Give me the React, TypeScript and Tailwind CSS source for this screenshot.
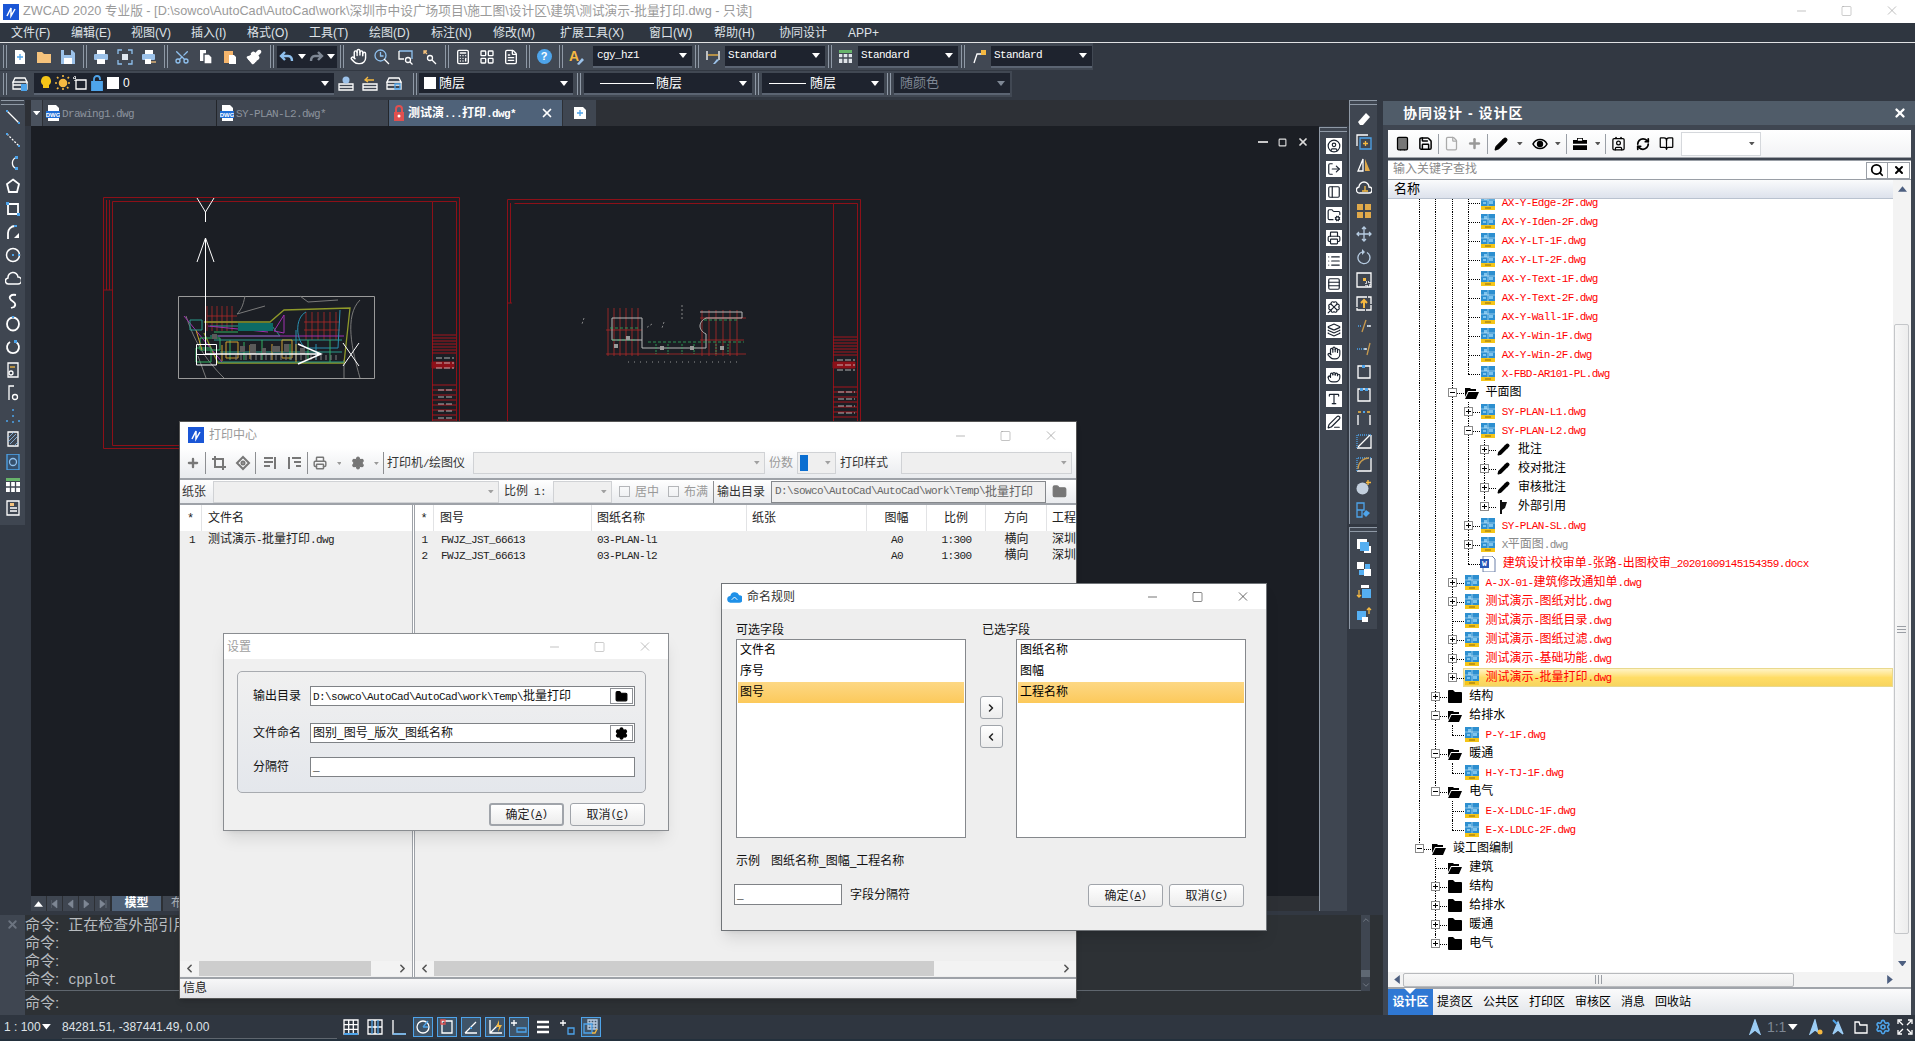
import type { ReactNode } from "react";
import {
  BookOpen, Building, Calculator, CircleUser, Clover, Contact, File, FileText, FolderCog, Grab, Hand, Layers,
  LayoutGrid, List, LogOut, PanelLeft, Paintbrush, Pencil, PenLine, Plus, Printer, RefreshCw, Rows3, Save, Scissors, Search,
  Settings, Type, X, Minus, Square, Folder, ChevronLeft, ChevronRight, ChevronUp, ChevronDown,
} from "lucide-react";

// SimSun-like run: latin is narrow mono, han stays on the 12px grid
const Sim = ({ t }: { t: string }) => (
  <>
    {t.split(/([\x20-\x7e]+)/).filter(Boolean).map((p, i) =>
      /^[\x20-\x7e]+$/.test(p) ? (
        <span key={i} className="font-['Liberation_Mono',monospace] text-[11px] tracking-[-0.6px] whitespace-pre">{p}</span>
      ) : (
        <span key={i}>{p}</span>
      )
    )}
  </>
);

const Mn = ({ a, k }: { a: string; k: string }) => (
  <>
    {a}
    <Sim t="(" />
    <span className="underline"><Sim t={k} /></span>
    <Sim t=")" />
  </>
);

const S = ({ children, c = "#fff", w = 1.3 }: { children: ReactNode; c?: string; w?: number }) => (
  <svg viewBox="0 0 16 16" className="w-4 h-4 shrink-0" fill="none" stroke={c} strokeWidth={w}>{children}</svg>
);

const Tri = ({ c = "#fff", s = 1 }: { c?: string; s?: number }) => (
  <svg viewBox="0 0 8 5" width={8 * s} height={5 * s} className="shrink-0"><path d="M0 0h8L4 5z" fill={c} /></svg>
);

const Grip = () => (
  <div className="w-[7px] h-full flex justify-center py-[2px] shrink-0"><div className="w-[4px] border-x border-[#8f99a6]" /></div>
);
const Sep = ({ w = "w-[9px]" }: { w?: string }) => (
  <div className={`${w} h-full flex justify-center py-[2px] shrink-0`}><div className="w-[4px] border-x border-[#8f99a6]" /></div>
);
const Slot = ({ children }: { children?: ReactNode }) => (
  <div className="w-6 h-full flex items-center justify-center shrink-0">{children}</div>
);
const Combo = ({ className, children, arrow = "#fff" }: { className: string; children?: ReactNode; arrow?: string }) => (
  <div className={`${className} h-[22px] flex items-center justify-between bg-[#1e232e] border-b-2 border-[#5b6472] pr-[5px] shrink-0`}>
    <div className="flex items-center min-w-0">{children}</div>
    <Tri c={arrow} />
  </div>
);

const MENU = [
  ["文件(F)", "w-[60px]"], ["编辑(E)", "w-[60px]"], ["视图(V)", "w-[60px]"], ["插入(I)", "w-[56px]"], ["格式(O)", "w-[62px]"],
  ["工具(T)", "w-[60px]"], ["绘图(D)", "w-[62px]"], ["标注(N)", "w-[62px]"], ["修改(M)", "w-[67px]"], ["扩展工具(X)", "w-[89px]"],
  ["窗口(W)", "w-[65px]"], ["帮助(H)", "w-[65px]"], ["协同设计", "w-[69px]"], ["APP+", "w-[40px]"],
];

const Toolbar1 = () => (
  <div className="w-[1093px] h-[27px] bg-[#414853] flex items-center pl-[1px]">
    <Grip />
    <Slot><S c="none"><path d="M3 1h7l3 3v11H3z" fill="#fff" /><path d="M8 5v6M5 8h6" stroke="#4ea4ea" /></S></Slot>
    <Slot><S c="none"><path d="M1 3h5l2 2h7v9H1z" fill="#f5c27c" /></S></Slot>
    <Slot><S c="none"><path d="M1 1h11l3 3v11H1z" fill="#9cc2ea" /><path d="M4 1h7v5H4z" fill="#414853" /><path d="M4 9h8v6H4z" fill="#fff" /></S></Slot>
    <Sep />
    <Slot><S c="none"><path d="M4 1h8v4H4z" fill="#fff" /><rect x="1" y="5" width="14" height="6" rx="1" fill="#9cc2ea" /><path d="M4 10h8v5H4z" fill="#fff" /></S></Slot>
    <Slot><S c="#8fc0ee"><path d="M1 5V1h4M11 1h4v4M15 11v4h-4M5 15H1v-4" /><path d="M5 5h6v6H5z" fill="#dfe8f2" stroke="none" /></S></Slot>
    <Slot><S c="none"><path d="M4 1h8v4H4z" fill="#fff" /><rect x="1" y="5" width="13" height="6" rx="1" fill="#9cc2ea" /><path d="M4 10h6v5H4z" fill="#fff" /><path d="M10 13h5" stroke="#f5c27c" /></S></Slot>
    <Sep />
    <Slot><Scissors size={16} color="#8fc0ee" className="-rotate-90" /></Slot>
    <Slot><S c="none"><path d="M2 1h6v11H2z" fill="#fff" /><path d="M6 5h5l3 3v7H6z" fill="#fff" stroke="#414853" /></S></Slot>
    <Slot><S c="none"><path d="M2 2h9v12H2z" fill="#f5b56c" /><path d="M7 6h5l2 2v7H7z" fill="#fff" /></S></Slot>
    <Slot><Paintbrush size={16} color="#fff" fill="#fff" /></Slot>
    <Sep w="w-[11px]" />
    <div className="w-[60px] h-[22px] bg-[#1e232e] flex items-center justify-around px-[1px] shrink-0">
      <S c="#8fc0ee" w={2.4}><path d="M6 3 2 7l4 4M2 7h7c3 0 4 2 4 5" /></S>
      <Tri />
      <S c="#7e8794" w={2.4}><path d="m10 3 4 4-4 4M14 7H7c-3 0-4 2-4 5" /></S>
      <Tri />
    </div>
    <Sep />
    <Slot><Hand size={17} color="#fff" /></Slot>
    <Slot><S c="#8fc0ee"><circle cx="6.500" cy="6.500" r="5.500" /><path d="M6.500 3v4h3" /><path d="m10 10 5 5" stroke="#fff" /></S></Slot>
    <Slot><S><path d="M1 2h13v8" stroke="#8fc0ee" /><path d="M1 2v8h5" /><circle cx="10" cy="11" r="2.500" /><path d="m12 13 2.500 2.500" /></S></Slot>
    <Slot><S><path d="M2 2 5 5M2 5V2h3" stroke="#f5c27c" /><circle cx="8" cy="9" r="2.500" /><path d="m10 11 4 4" /></S></Slot>
    <Sep />
    <Slot><Calculator size={16} color="#fff" /></Slot>
    <Slot><LayoutGrid size={16} color="#fff" /></Slot>
    <Slot><FileText size={16} color="#fff" /></Slot>
    <Sep />
    <Slot><div className="w-[15px] h-[15px] rounded-full bg-[#4ea4ea] text-white text-[11px] leading-[15px] text-center font-bold">?</div></Slot>
    <Sep />
    <Slot><S c="none"><text x="0" y="12" fontSize="14" fontWeight="bold" fill="#f5b942">A</text><path d="m8 15 5-6 2 2-5 5z" fill="#9cc2ea" /></S></Slot>
    <Combo className="w-[99px] ml-[4px] pl-[4px] text-white"><Sim t="cgy_hz1" /></Combo>
    <Sep />
    <Slot><S><path d="M2 2v9M14 2v9" /><path d="M3 6h10" stroke="#f5b942" /><path d="m8 15 4-5 2 1-4 4z" fill="#9cc2ea" stroke="none" /></S></Slot>
    <Combo className="w-[100px] pl-[3px] text-white"><Sim t="Standard" /></Combo>
    <Sep />
    <Slot><S c="none"><path d="M1 1h13v3H1z" fill="#67b36a" /><path d="M1 5h13v9H1z" fill="#dfe3e8" /><path d="M5 5v9M10 5v9M1 9h13" stroke="#414853" /></S></Slot>
    <Combo className="w-[100px] pl-[3px] text-white"><Sim t="Standard" /></Combo>
    <Sep />
    <Slot><S><path d="M3 14 6 5h5" /><path d="M10 1h5v5h-5z" fill="#f5b942" stroke="none" /></S></Slot>
    <Combo className="w-[101px] pl-[3px] text-white"><Sim t="Standard" /></Combo>
  </div>
);

const Toolbar2 = () => (
  <div className="w-[1012px] h-[26px] bg-[#414853] flex items-center pl-[1px] mt-[1px]">
    <Grip />
    <Slot><S><path d="M3 2h10l2 4H1zM1 6h14v3H1zM1 9h14v4H1z" /><path d="M9 8h6v7H9z" fill="#4ea4ea" stroke="none" /></S></Slot>
    <Combo className="w-[300px] ml-[2px] pl-[4px] text-white">
      <div className="flex items-center gap-[1px]">
        <S c="none"><path d="M8 1a5 5 0 0 1 3 9v3H5v-3a5 5 0 0 1 3-9z" fill="#f5c518" /></S>
        <S c="#f5b942" w={1.6}><circle cx="8" cy="8" r="3.500" fill="#f5b942" /><path d="M8 0v3M8 13v3M0 8h3M13 8h3M2 2l2 2M12 12l2 2M14 2l-2 2M2 14l2-2" strokeDasharray="2 1" /></S>
        <S><path d="M4 5h10v9H4z" /><path d="M3 1v5M1 3h4" stroke="#fff" strokeDasharray="1 1" /></S>
        <S c="#4ea4ea" w={1.8}><path d="M3 7h10v8H3z" fill="#4ea4ea" /><path d="M5 7V4a3 3 0 0 1 6 0v1" /></S>
        <div className="w-[12px] h-[12px] bg-white ml-[1px]" />
        <span className="ml-[3px] text-[12px]">0</span>
      </div>
    </Combo>
    <Slot><S><path d="M1 8h14v3H1zM1 11h14v3H1z" /><circle cx="8" cy="4" r="3.500" fill="#9cc2ea" stroke="none" /></S></Slot>
    <Slot><S><path d="M1 8h14v3H1zM1 11h14v3H1z" /><path d="M6 1 3 4l3 2M3 4h9" stroke="#f5b942" /></S></Slot>
    <Slot><S><path d="M3 2h10l2 4H1zM1 6h14v3H1zM1 9h14v4H1z" /><path d="M9 8h5v5H9z" stroke="#4ea4ea" /></S></Slot>
    <div className="w-[4px] shrink-0" />
    <Sep />
    <Combo className="w-[154px] pl-[5px] text-white text-[13px]"><div className="w-[12px] h-[12px] bg-white mr-[3px]" />随层</Combo>
    <Sep w="w-[11px]" />
    <Combo className="w-[168px] pl-[16px] text-white text-[13px]"><div className="w-[54px] border-t border-white mr-[2px]" />随层</Combo>
    <Sep w="w-[10px]" />
    <Combo className="w-[122px] pl-[7px] text-white text-[13px]"><div className="w-[37px] border-t border-white mr-[4px]" />随层</Combo>
    <Sep w="w-[10px]" />
    <Combo className="w-[116px] pl-[6px] text-[#7e8794] text-[13px]" arrow="#7e8794">随颜色</Combo>
  </div>
);

const FileTab = ({ className, name }: { className: string; name: string }) => (
  <div className={`${className} h-full bg-[#3f4651] flex items-center pl-[3px] text-[#8c939d] border-r border-[#23262b] shrink-0`}>
    <svg viewBox="0 0 14 16" className="w-[14px] h-[16px] shrink-0">
      <path d="M2 0h8l3 3v13H2z" fill="#fff" /><path d="M0 6h14v7H0z" fill="#1f6fd8" />
      <text x="7" y="12" fontSize="6" fill="#fff" textAnchor="middle" fontWeight="bold">DWG</text>
    </svg>
    <span className="ml-[2px]"><Sim t={name} /></span>
  </div>
);

const LEFT_ICONS: ReactNode[] = [
  <><path d="m2 2 12 12" /><path d="M1 1h2v2H1zM13 13h2v2h-2z" fill="#4ea4ea" stroke="none" /></>,
  <><path d="m2 2 12 12" strokeDasharray="2 1.500" /><path d="M1 1h2v2H1zM13 13h2v2h-2z" fill="#4ea4ea" stroke="none" /></>,
  <><path d="M11 2.500a6 6 0 0 0 0 11" /><path d="M10 1h3v3h-3zM10 12h3v3h-3z" fill="#4ea4ea" stroke="none" /></>,
  <path d="M8 1.500 14 6l-2 8H4L2 6z" strokeWidth="1.800" />,
  <><path d="M3 3h10v10H3z" strokeWidth="1.800" /><path d="M12 12h3v3h-3zM1 1h3v3H1z" fill="#4ea4ea" stroke="none" /></>,
  <><path d="M3 15V9a7 7 0 0 1 7-7" strokeWidth="1.800" /><path d="M9 14l5-5v5z" fill="#fff" stroke="none" /><path d="M9 1h3v2H9z" fill="#4ea4ea" stroke="none" /></>,
  <><circle cx="8" cy="8" r="6.500" strokeWidth="1.500" /><path d="M7 7h2v2H7zM13 7h2v2h-2z" fill="#4ea4ea" stroke="none" /></>,
  <path d="M4 14a3 3 0 0 1-1-6 5 5 0 0 1 10-1 3.500 3.500 0 0 1 0 7z" strokeWidth="1.500" />,
  <path d="M11 2C6 1 3 4 6 7c3 2 6 4 3 7l-3 1" strokeWidth="1.800" stroke="#fff" />,
  <><ellipse cx="8" cy="8" rx="6" ry="6.500" strokeWidth="1.800" /><path d="M7 0h2v2H7z" fill="#4ea4ea" stroke="none" /></>,
  <><path d="M5 3a6 6 0 1 0 6 0" strokeWidth="1.800" /><path d="M9 1h3v3H9z" fill="#4ea4ea" stroke="none" /></>,
  <><path d="M3 1h10v14H3z" /><circle cx="6" cy="11" r="2" /><path d="M5 5h5" stroke="#f5b942" /></>,
  <><path d="M4 15V1h5" /><circle cx="10" cy="12" r="2.500" /></>,
  <path d="M8 1v2M8 7v2M8 13v2M2 12v2M14 12v2" stroke="#4ea4ea" strokeWidth="1.500" />,
  <><path d="M3 1h10v14H3z" /><path d="m3 7 6-6M3 11l8-8M5 13l8-8M9 15l4-4" stroke="#8fc0ee" strokeWidth=".8" /></>,
  <><path d="M2 0h12v16H2z" stroke="#4ea4ea" fill="#36506c" /><circle cx="8" cy="8" r="3.500" stroke="#8fc0ee" /></>,
  <><path d="M1 1h14v3H1z" fill="#67b36a" stroke="none" /><path d="M1 5h14v10H1z" fill="#fff" stroke="none" /><path d="M5.500 5v10M10.500 5v10M1 10h14" stroke="#414853" /></>,
  <><path d="M2 1h12v14H2z" /><path d="M5 8h7M5 11h7" /><path d="M5 3h4v3H5z" fill="#f5c27c" stroke="none" /></>,
];

const STRIP_B: ReactNode[] = [
  <path d="M2 11 10 2l4 4-7 8H4z" fill="#fff" stroke="none" />,
  <><path d="M1 12V1h11" /><path d="M4 4h11v11H4z" stroke="#4ea4ea" /><path d="M9.500 7v5M7 9.500h5" stroke="#f5b942" /></>,
  <><path d="M7 2v12H2z" /><path d="M9 2v12h5z" fill="#e0a94a" stroke="none" /></>,
  <><path d="M4 13a3 3 0 0 1-1-6 5 5 0 0 1 10 0 3 3 0 0 1 0 6z" /><path d="M6 11h6M9 11V6" stroke="#f5b942" /></>,
  <path d="M1 1h6v6H1z M9 1h6v6H9z M1 9h6v6H1z M9 9h6v6H9z" fill="#e0a94a" stroke="none" />,
  <path d="M8 1v14M1 8h14M6 3l2-2 2 2M6 13l2 2 2-2M3 6 1 8l2 2M13 6l2 2-2 2" stroke="#b7cce2" />,
  <><path d="M11 3.500a6 6 0 1 1-5-.500" stroke="#b7cce2" /><path d="m6 0 3 3-3 3z" fill="#b7cce2" stroke="none" /></>,
  <><path d="M1 1h14v14H1z" /><path d="M7 6h3v3H7z" fill="#f5b942" stroke="none" /><path d="M10 10h4v4h-4z" strokeDasharray="1 1" /></>,
  <><path d="M1 2h14v13H1z" strokeDasharray="10 1" /><path d="M8 13V5M5 8l3-3 3 3" stroke="#f5b942" strokeWidth="2" /></>,
  <><path d="M2 8h4M11 8h4" stroke="#4ea4ea" strokeDasharray="1 1" /><path d="M10 2 6 14" stroke="#c89b4e" /><path d="M11 8h4" /></>,
  <><path d="M1 8h9" stroke="#4ea4ea" strokeDasharray="1 1" /><path d="M8 8h3" /><path d="m14 2-3 12" stroke="#c89b4e" /></>,
  <><path d="M2 2h12v12H2z" /><path d="M6 1h3v3H6z" fill="#4ea4ea" stroke="none" /></>,
  <><path d="M2 2h12v12H2z" /><path d="M4 1h3v3H4zM9 1h3v3H9z" fill="#4ea4ea" stroke="none" /></>,
  <><path d="M2 15V5M14 15V5" /><path d="M2 2h3M14 2h-3" stroke="#f5b942" /><path d="M7 1h2v2H7z" fill="#4ea4ea" stroke="none" /></>,
  <><path d="M15 2v13H1" /><path d="M1 15V2h14" stroke="#4ea4ea" strokeDasharray="1 1" /><path d="M2 14 14 2" /></>,
  <><path d="M15 2v13H1" /><path d="M1 15V2h14" stroke="#4ea4ea" strokeDasharray="1 1" /><path d="M2 13A11 11 0 0 1 13 2" stroke="#c89b4e" /></>,
  <><circle cx="6.500" cy="9.500" r="6" fill="#c3cfdd" stroke="none" /><path d="M12 1v5M10 3.500h5" stroke="#f5b942" /></>,
  <><path d="M1 1h7v7H1zM1 8h5v7H1z" stroke="#4ea4ea" /><path d="m10 8 4 3-4 4-3-3z" fill="#4ea4ea" stroke="none" /></>,
];
const STRIP_B2: ReactNode[] = [
  <><path d="M1 1h10v10H1zM8 8h7v7H8z" fill="#fff" stroke="none" /><path d="M4 4h9v9H4z" fill="#55aff2" stroke="none" /></>,
  <><path d="M1 1h7v7H1zM8 8h7v7H8z" fill="#fff" stroke="none" /><path d="M9 3h5v5H9zM3 9h5v5H3z" fill="#55aff2" stroke="none" /></>,
  <><path d="M5 1h8v3H5z" fill="#fff" stroke="none" /><path d="M6 5h9v9H6z" fill="#55aff2" stroke="none" /><path d="M3 6v7M1 11l2 2 2-2" stroke="#f5b942" /></>,
  <><path d="M1 4h9v9H1z" fill="#55aff2" stroke="none" /><path d="M6 10h6v5H6z" fill="#fff" stroke="none" /><path d="M13 1v6M11 3l2-2 2 2" stroke="#f5b942" /></>,
];
const STRIP_A = [CircleUser, LogOut, PanelLeft, FolderCog, Printer, List, Rows3, Clover, Layers, Hand, Grab, Type, PenLine];

const IconStrip = ({ icons }: { icons: ReactNode[] }) => (
  <div className="flex flex-col items-center">
    {icons.map((d, i) => (
      <div key={i} className="h-[23px] flex items-center justify-center"><S>{d}</S></div>
    ))}
  </div>
);

const Drawing = () => {
  const stripes = (x1: number, x2: number, y1: number, y2: number, step: number) => {
    const out: ReactNode[] = [];
    for (let y = y1; y < y2; y += step) out.push(<path key={`${x1}-${y}`} d={`M${x1} ${y}H${x2}`} />);
    return out;
  };
  const ticks = (x1: number, x2: number, y1: number, y2: number, step: number) => {
    const out: ReactNode[] = [];
    for (let x = x1; x < x2; x += step) out.push(<path key={`${y1}-${x}`} d={`M${x} ${y1}V${y2}`} />);
    return out;
  };
  return (
    <svg viewBox="31 126 1288 770" className="w-full h-full block">
      <g fill="none" stroke="#8d1018" strokeWidth="1">
        <path d="M103.500 197.500h356v251h-356zM112.500 201.500h320v244h-320zM432.500 201.500h24v244M106.500 200v90M109.500 200v90M112 290h-8" />
        <path d="M507.500 199.500h353V430M507.500 199.500V430M514.500 203.500h319V430M833.500 203.500h24V430M510.500 203v100M512 303h-5" />
        <g stroke="#a6141c">{stripes(432, 456, 335, 356, 3)}{stripes(432, 456, 385, 422, 5)}{stripes(833, 857, 337, 358, 3)}{stripes(833, 857, 387, 422, 5)}</g>
        <path d="M432 362h22v6h-22zM833 362h22v6h-22z" fill="#8d1018" />
        <g stroke="#d8d8d8" strokeDasharray="6 2" strokeWidth=".8">{stripes(436, 454, 358, 372, 5)}{stripes(837, 855, 360, 374, 5)}{stripes(438, 454, 390, 420, 7)}{stripes(838, 855, 392, 420, 7)}</g>
      </g>
      <g fill="none" strokeWidth="1">
        <path d="M178.500 296.500h196v82h-196z" stroke="#9a9a9a" />
        <path d="M186 316c10 30 22 46 38 62M245 296c-2 10-4 14-8 18l28-8M300 296l8 6 30-2M360 300c-16 16-8 50 0 78M344 378V360M206 378l-8-22" stroke="#7a7a7a" />
        <g stroke="#b02828" strokeWidth=".8">{ticks(207, 236, 306, 331, 5)}<path d="M207 316h30M207 322h30" />{ticks(306, 340, 312, 340, 6)}<path d="M304 322h36M304 330h36" /></g>
        <path d="M204 322h66l14-12 66-2-6 55H218l-14-30" stroke="#8f9a2a" strokeWidth="1.300" />
        <path d="M210 326h62l8 10h-70M214 340h128M220 352h122M218 362h126" stroke="#2a9a8a" />
        <path d="M184 316l38 46M208 326l60 6M284 315l-10 16 10 2zM218 336h126" stroke="#a030b0" />
        <path d="M306 312c-12 6-10 30 0 36h32l2-38M296 330v30M316 344v16" stroke="#2a8fb0" />
        <path d="M200 338h20v12h-20zM196 348h15v14h-15zM230 340v20M244 342v18M262 340v20M290 344v16M308 340v20M330 340v22M214 332h24" stroke="#30b060" />
        <path d="M222 345v16M250 345v14M272 344v16M296 344v18M226 342h12v16h-12zM282 340h10v18h-10zM196 330l6 20" stroke="#d0a030" />
        <path d="M238 323h35v8h-35z" fill="#0d6b66" stroke="none" />
        <path d="M190 320h12v10h-12z" stroke="#2a9a8a" />
        <g stroke="#808080">{ticks(236, 340, 355, 360, 5)}</g>
        <path d="M250 344h6v10h-6zM262 348h4v6h-4zM272 346h8v6h-8zM284 344h5v8h-5zM240 346h5v6h-5zM212 334h5v5h-5zM300 348h5v6h-5z" fill="#5a5a5a" stroke="none" />
      </g>
      <g fill="none" stroke="#fff" strokeWidth="1">
        <path d="M197 198l8.500 14 8.500-14M205.500 212v10M205.500 238V354M197 262l8.500-24 8.500 24" />
        <path d="M205.500 354H321M298 344l23 10-23 10" strokeWidth="1.500" />
        <path d="M343 343l16 23M359 343l-16 23" />
        <path d="M196.500 344.500h20v20.500h-20zM196.500 354.500h20" />
      </g>
      <g fill="none" strokeWidth=".8">
        <g stroke="#b02828">{ticks(608, 640, 308, 356, 6)}{ticks(702, 744, 310, 356, 7)}<path d="M606 330h36M606 354h140M700 318h46M700 340h44" /></g>
        <path d="M700 312h42v6h-36c-8 4-8 12 0 16v14h-64v-8h-30v-22h30v22" stroke="#b8b8b8" strokeWidth="1" />
        <path d="M610 328h30M612 340h24M648 342h96M704 320h34" stroke="#30b060" strokeDasharray="3 2" />
        <path d="M656 344v10M668 344v10M682 344v10M694 344v10M716 344v10M728 344v10" stroke="#30b060" strokeDasharray="2 1" />
        <path d="M628 362h112" stroke="#b0b0b0" strokeDasharray="1 5" />
        <path d="M682 305v14M584 318l-2 6M652 324l-6 4M664 322l-2 6" stroke="#a0a0a0" strokeDasharray="2 2" />
        <path d="M614 344h4v4h-4zM626 336h4v4h-4zM660 346h4v4h-4zM690 346h4v4h-4zM720 346h4v4h-4z" fill="#9a9a9a" stroke="none" />
      </g>
    </svg>
  );
};

const Command = () => (
  <div className="h-[100px] flex bg-[#2d3135] text-[#b8bcc0] mt-[4px]">
    <div className="w-[25px] bg-[#3f4651] flex justify-center pt-[3px] shrink-0"><X size={13} strokeWidth={3.5} color="#6c7480" /></div>
    <div className="flex-1 min-w-0 flex flex-col">
      <div className="h-[76px] border-b border-[#5f666e] text-[15px] leading-[18px] pt-[1px] flex flex-col">
        <div>命令:<span className="ml-[9px]">正在检查外部引用</span></div>
        <div>命令:</div>
        <div>命令:</div>
        <div>命令:<span className="ml-[9px] font-['Liberation_Mono',monospace] text-[14px] tracking-[-0.4px]">cpplot</span></div>
      </div>
      <div className="text-[15px] leading-[22px] pt-[1px]">命令:</div>
    </div>
    <div className="w-[9px] h-[76px] mr-[13px] bg-[#3f4651] flex flex-col items-center justify-between shrink-0 pb-[1px]">
      <ChevronUp size={10} color="#79818c" />
      <div className="flex flex-col items-center w-full">
        <div className="w-full h-[7px] bg-[#5f6873] mb-[3px]" />
        <ChevronDown size={10} color="#79818c" />
      </div>
    </div>
  </div>
);

const LineBox = ({ on, children }: { on?: boolean; children: ReactNode }) => (
  <div className="w-6 flex items-center justify-center shrink-0">
    <div className={`w-[20px] h-[20px] flex items-center justify-center ${on ? "border border-[#4ea4ea] bg-[#3f5468]" : ""}`}>{children}</div>
  </div>
);

const StatusBar = () => (
  <div className="h-[26px] bg-[#2f3640] flex items-center text-[#dfe3e8] border-b-2 border-[#23303c]">
    <div className="w-[62px] pl-[4px] text-[12px] shrink-0 flex items-center gap-[1px]">1 : 100<Tri s={1.1} /></div>
    <div className="w-[275px] h-full border-b border-[#5f666e] text-[12px] leading-[24px] shrink-0">84281.51, -387441.49, 0.00</div>
    <div className="w-[2px]" />
    <LineBox><S><path d="M1 1h14v14H1zM5.700 1v14M10.300 1v14M1 5.700h14M1 10.300h14" /><path d="M1 15h14" stroke="#4ea4ea" strokeWidth="2" /></S></LineBox>
    <LineBox><S><path d="M1 1h14v14H1zM8 1v14M1 8h14" /><path d="M5 1v14M11 1v14" stroke="#4ea4ea" /></S></LineBox>
    <LineBox><S><path d="M2 1v14h13" /><path d="M2 15h13" stroke="#4ea4ea" /></S></LineBox>
    <LineBox on><S><circle cx="8" cy="8" r="6" /><path d="m8 8 5-6M8 8h5" stroke="#4ea4ea" /></S></LineBox>
    <LineBox on><S><path d="M3 2h10v12H3z" /><path d="M2 1h4v4H2z" stroke="#e05050" /></S></LineBox>
    <LineBox on><S><path d="m2 14 11-11M2 14h12" /><path d="M7 8h2v2H7z" fill="#4ea4ea" stroke="none" /></S></LineBox>
    <LineBox on><S><path d="M3 1v13h12M3 14l8-8" /><path d="M12 1 9 8h3l-1 5 4-7h-3z" fill="#f5b942" stroke="none" /></S></LineBox>
    <LineBox on><S><path d="M3 1v6M0 4h6" /><path d="M6 9h9v4H6z" stroke="#4ea4ea" /></S></LineBox>
    <LineBox><S w={2.4}><path d="M2 3h12M2 8h12M2 13h12" /></S></LineBox>
    <LineBox><S><path d="M4 1v6M1 4h6" /><path d="M9 9h6v6H9z" stroke="#4ea4ea" /></S></LineBox>
    <LineBox on><S><path d="M5 1h9v9H5zM8 1v9M11 1v9M5 4h9M5 7h9" stroke="#b7cce2" /><path d="M1 5h8v9H1z" stroke="#4ea4ea" /><path d="m14 10-2 4h-3" stroke="#f5b942" /></S></LineBox>
    <div className="ml-auto flex items-center text-[#7e8794] text-[14px] pr-[2px]">
      <S c="#9ccdf5"><path d="M8 1 3 15l5-4 5 4z" fill="#9ccdf5" /></S>
      <span className="ml-[4px]">1:1</span><span className="ml-[2px] mr-[10px]"><Tri s={1.2} /></span>
      <S c="#9ccdf5"><path d="M7 1 2 15l5-4 3 2z" fill="#9ccdf5" /><circle cx="12" cy="13" r="2.500" fill="#f5b942" stroke="none" /></S>
      <span className="w-[6px]" />
      <S c="#9ccdf5"><path d="M8 3 3 15l5-4 5 4z" fill="#9ccdf5" /><path d="m3 1 4 4" stroke="#4ea4ea" strokeWidth="2" /></S>
      <span className="w-[7px]" />
      <S><path d="M2 14V3h4l1 3h7v8z" /></S>
      <span className="w-[6px]" />
      <Settings size={16} color="#4ea4ea" strokeWidth={2.4} />
      <span className="w-[6px]" />
      <S><path d="M1 5V1h4M11 1h4v4M15 11v4h-4M5 15H1v-4M2 2l4 4M14 2l-4 4M14 14l-4-4M2 14l4-4" /></S>
    </div>
  </div>
);

type Row = { l: number; k: "file" | "open" | "closed" | "pen" | "xref" | "word"; t: string; e?: "+" | "-"; gray?: boolean; sel?: boolean };

const ROWS: Row[] = [
  ...["AX-Y-Edge-2F.dwg", "AX-Y-Iden-2F.dwg", "AX-Y-LT-1F.dwg", "AX-Y-LT-2F.dwg", "AX-Y-Text-1F.dwg", "AX-Y-Text-2F.dwg", "AX-Y-Wall-1F.dwg", "AX-Y-Win-1F.dwg", "AX-Y-Win-2F.dwg", "X-FBD-AR101-PL.dwg"].map((t): Row => ({ l: 3, k: "file", t })),
  { l: 2, k: "open", t: "平面图", e: "-" },
  { l: 3, k: "file", t: "SY-PLAN-L1.dwg", e: "+" },
  { l: 3, k: "file", t: "SY-PLAN-L2.dwg", e: "-" },
  { l: 4, k: "pen", t: "批注", e: "+" },
  { l: 4, k: "pen", t: "校对批注", e: "+" },
  { l: 4, k: "pen", t: "审核批注", e: "+" },
  { l: 4, k: "xref", t: "外部引用", e: "+" },
  { l: 3, k: "file", t: "SY-PLAN-SL.dwg", e: "+" },
  { l: 3, k: "file", t: "X平面图.dwg", e: "+", gray: true },
  { l: 3, k: "word", t: "建筑设计校审单-张路-出图校审_20201009145154359.docx" },
  { l: 2, k: "file", t: "A-JX-01-建筑修改通知单.dwg", e: "+" },
  { l: 2, k: "file", t: "测试演示-图纸对比.dwg", e: "+" },
  { l: 2, k: "file", t: "测试演示-图纸目录.dwg" },
  { l: 2, k: "file", t: "测试演示-图纸过滤.dwg", e: "+" },
  { l: 2, k: "file", t: "测试演示-基础功能.dwg", e: "+" },
  { l: 2, k: "file", t: "测试演示-批量打印.dwg", e: "+", sel: true },
  { l: 1, k: "closed", t: "结构", e: "+" },
  { l: 1, k: "open", t: "给排水", e: "-" },
  { l: 2, k: "file", t: "P-Y-1F.dwg" },
  { l: 1, k: "open", t: "暖通", e: "-" },
  { l: 2, k: "file", t: "H-Y-TJ-1F.dwg" },
  { l: 1, k: "open", t: "电气", e: "-" },
  { l: 2, k: "file", t: "E-X-LDLC-1F.dwg" },
  { l: 2, k: "file", t: "E-X-LDLC-2F.dwg" },
  { l: 0, k: "open", t: "竣工图编制", e: "-" },
  { l: 1, k: "open", t: "建筑" },
  { l: 1, k: "closed", t: "结构", e: "+" },
  { l: 1, k: "closed", t: "给排水", e: "+" },
  { l: 1, k: "closed", t: "暖通", e: "+" },
  { l: 1, k: "closed", t: "电气", e: "+" },
];

const hasNext = (i: number, c: number) => {
  for (let j = i + 1; j < ROWS.length; j++) {
    if (ROWS[j].l < c) return false;
    if (ROWS[j].l === c) return true;
  }
  return false;
};

const RowIcon = ({ k }: { k: Row["k"] }) => {
  if (k === "file")
    return (
      <svg viewBox="0 0 14 15" className="w-[14px] h-[15px] shrink-0">
        <path d="M0 0h14v11H0z" fill="#2d8fd0" /><path d="M3 2h3v3H3zM8 6h4v3H8zM2 7h3v2H2z" fill="#7cc4ee" /><path d="M7 0v11M0 5h14" stroke="#d8eefa" strokeWidth=".6" />
        <path d="M0 11h14v4H0z" fill="#f5c518" /><path d="M4 13h6" stroke="#8a6a10" />
      </svg>
    );
  if (k === "open")
    return (
      <svg viewBox="0 0 14 13" className="w-[14px] h-[13px] shrink-0"><path d="M0 2h5l1 1h5v2H3L0 11zM3.500 6H14l-3 7H0z" fill="#000" /></svg>
    );
  if (k === "closed")
    return (
      <svg viewBox="0 0 14 13" className="w-[14px] h-[13px] shrink-0"><path d="M1 0h4l2 2h6a1 1 0 0 1 1 1v9a1 1 0 0 1-1 1H1a1 1 0 0 1-1-1V1a1 1 0 0 1 1-1z" fill="#000" /></svg>
    );
  if (k === "pen") return <Pencil size={13} color="#000" fill="#000" className="shrink-0 mr-[1px]" />;
  if (k === "xref")
    return (
      <svg viewBox="0 0 14 14" className="w-[14px] h-[14px] shrink-0"><path d="M3 0h2v14H3zM5 2h5l-2 6-3 2z" fill="#111" /></svg>
    );
  return (
    <svg viewBox="0 0 16 16" className="w-[16px] h-[16px] shrink-0 -ml-[1px]">
      <path d="M3 0h9l3 3v13H3z" fill="#fff" stroke="#6a7fa8" /><path d="M0 3h9v9H0z" fill="#2a56b8" />
      <text x="4.500" y="10" fontSize="8" fill="#fff" textAnchor="middle" fontWeight="bold">W</text>
    </svg>
  );
};

const Tree = () => (
  <div className="flex-1 min-h-0 overflow-hidden bg-white">
    <div className="-mt-[6px] font-['Liberation_Mono','Noto_Sans_CJK_SC',monospace]">
      {ROWS.map((r, i) => {
        const cx = 31 + 16.25 * r.l;
        const cols: number[] = [];
        for (let c = 0; c < r.l; c++) if (hasNext(i, c)) cols.push(c);
        return (
          <div key={i} className="relative h-[19px] flex items-center text-[12px] leading-none whitespace-nowrap">
            {r.sel && (
              <div className="absolute top-0 bottom-0 right-0 border border-[#e9d98e] bg-linear-to-b from-[#fff3c4] via-[#ffdd66] to-[#f7d45f]" style={{ left: cx + 11 }} />
            )}
            {cols.map((c) => (
              <div key={c} className="absolute top-0 bottom-0 border-l border-dotted border-black" style={{ left: 31 + 16.25 * c }} />
            ))}
            <div className="absolute top-0 border-l border-dotted border-black" style={{ left: cx, height: hasNext(i, r.l) ? 19 : 10 }} />
            <div className="absolute top-[10px] w-[12px] border-t border-dotted border-black" style={{ left: cx }} />
            {r.e && (
              <div className="absolute top-[5px] w-[9px] h-[9px] bg-white border border-[#8a8a8a] flex items-center justify-center" style={{ left: cx - 4 }}>
                <div className="relative w-[5px] h-[1px] bg-black">
                  {r.e === "+" && <div className="absolute left-[2px] -top-[2px] w-[1px] h-[5px] bg-black" />}
                </div>
              </div>
            )}
            <div className="relative flex items-center" style={{ marginLeft: cx + 13 }}>
              <RowIcon k={r.k} />
              <span className={`ml-[7px] ${r.gray ? "text-[#8a8a8a]" : r.k === "file" || r.k === "word" ? "text-[#ff0000]" : "text-black"}`}>
                <Sim t={r.t} />
              </span>
            </div>
          </div>
        );
      })}
    </div>
  </div>
);

const PSlot = ({ children }: { children: ReactNode }) => <div className="w-[23px] flex items-center justify-center shrink-0">{children}</div>;
const PSep = () => <div className="w-[1px] h-[20px] bg-[#9a9fa6] mx-[1px] shrink-0" />;

const Panel = () => (
  <div className="w-[532px] h-[914px] bg-[#3f4651] flex flex-col shrink-0 pl-[5px] pr-[4px] mt-[1px] relative">
    <div className="h-[24px] -ml-[5px] -mr-[4px] bg-[#505c69] flex items-center justify-between pl-[20px] pr-[8px] text-white text-[14px] font-bold shrink-0">
      <span className="tracking-[1px]">协同设计 - 设计区</span>
      <X size={14} strokeWidth={4} color="#fff" />
    </div>
    <div className="h-[5px] shrink-0" />
    <div className="h-[28px] bg-linear-to-b from-white to-[#f2f3f5] flex items-center pl-[3px] shrink-0 border-b border-[#a0a4aa]">
      <PSlot><Building size={15} color="#000" fill="#777" /></PSlot>
      <PSlot><Save size={15} color="#000" strokeWidth={2.4} /></PSlot>
      <PSep />
      <PSlot><File size={15} color="#aaa" /></PSlot>
      <PSlot><Plus size={15} color="#999" strokeWidth={4} /></PSlot>
      <PSep />
      <PSlot><Pencil size={14} color="#000" fill="#000" /></PSlot>
      <div className="w-[16px] flex justify-center"><Tri c="#555" s={0.7} /></div>
      <PSlot><S c="#000" w={1.6}><path d="M1 8c3-6 11-6 14 0-3 6-11 6-14 0z" /><circle cx="8" cy="8" r="3.200" fill="#000" stroke="none" /></S></PSlot>
      <div className="w-[14px] flex justify-center"><Tri c="#555" s={0.7} /></div>
      <PSep />
      <PSlot><S c="none"><path d="M5 4V2h6v2h4v10H1V4z" fill="#000" /><path d="M6.500 3.500h3V4h-3zM1 8.500h14" stroke="#fff" /></S></PSlot>
      <div className="w-[13px] flex justify-center"><Tri c="#555" s={0.7} /></div>
      <PSep />
      <PSlot><Contact size={15} color="#000" /></PSlot>
      <div className="ml-[1px]"><PSlot><RefreshCw size={14} color="#000" strokeWidth={3} /></PSlot></div>
      <div className="ml-[1px]"><PSlot><BookOpen size={15} color="#000" /></PSlot></div>
      <div className="w-[80px] h-[24px] ml-[3px] border border-[#d5d8dc] bg-white flex items-center justify-end pr-[5px]"><Tri c="#555" s={0.7} /></div>
    </div>
    <div className="h-[20px] mt-[2px] bg-white border-y border-[#9a9fa6] flex items-center justify-between pl-[5px] shrink-0">
      <span className="text-[12px] text-[#8a8a8a] pb-[2px]">输入关键字查找</span>
      <div className="flex h-[17px] border border-[#9a9fa6] mr-[1px]">
        <div className="w-[21px] flex items-center justify-center border-r border-[#9a9fa6]"><Search size={14} color="#000" strokeWidth={3} /></div>
        <div className="w-[21px] flex items-center justify-center"><X size={12} color="#000" strokeWidth={4} /></div>
      </div>
    </div>
    <div className="flex-1 min-h-0 flex">
      <div className="flex-1 min-w-0 flex flex-col">
        <div className="h-[19px] bg-linear-to-b from-[#fafbfc] to-[#dde2ec] border-b border-[#b9c2cf] text-[13px] text-black pl-[6px] leading-[18px] shrink-0">名称</div>
        <Tree />
      </div>
      <div className="w-[18px] bg-[#f3f3f3] relative flex flex-col items-center justify-between py-[6px] shrink-0">
        <svg viewBox="0 0 8 5" width="9" height="6"><path d="M0 5h8L4 0z" fill="#4d5f80" /></svg>
        <div className="absolute left-[1px] right-[2px] top-[144px] h-[610px] bg-linear-to-r from-[#f7f7f7] to-[#ededed] border border-[#c4c6c9] rounded-[2px] flex items-center justify-center">
          <div className="w-[9px] h-[7px] border-y border-[#9a9ea4] flex items-center"><div className="w-full border-t border-[#9a9ea4]" /></div>
        </div>
        <Tri c="#4d5f80" s={1.1} />
      </div>
    </div>
    <div className="h-[17px] bg-[#f3f3f3] flex items-center pl-[6px] pr-[18px] border-b-2 border-[#a0a4aa] shrink-0">
      <svg viewBox="0 0 5 8" width="6" height="9"><path d="M5 0v8L0 4z" fill="#4d5f80" /></svg>
      <div className="ml-[3px] w-[391px] h-[14px] bg-linear-to-b from-[#f8f8f8] to-[#ececec] border border-[#b8babd] rounded-[2px] flex items-center justify-center">
        <div className="h-[9px] w-[7px] border-x border-[#9a9ea4] flex justify-center"><div className="h-full border-l border-[#9a9ea4]" /></div>
      </div>
      <svg viewBox="0 0 5 8" width="6" height="9" className="ml-auto"><path d="M0 0v8l5-4z" fill="#4d5f80" /></svg>
    </div>
    <div className="h-[26px] bg-linear-to-b from-[#fbfbfc] to-[#e3e6ea] flex items-center text-[12px] text-black shrink-0 whitespace-nowrap">
      <div className="relative w-[45px] h-full bg-[#2f78d4] text-white font-bold flex items-center justify-center">
        设计区
        <svg viewBox="0 0 12 6" className="absolute -top-[1px] left-[16px] w-[12px] h-[6px]"><path d="M0 0h12L6 6z" fill="#fff" /></svg>
      </div>
      <div className="flex gap-[10px] ml-[4px]">
        <span>提资区</span><span>公共区</span><span>打印区</span><span>审核区</span><span>消息</span><span>回收站</span>
      </div>
    </div>
  </div>
);

const WinButtons = ({ c, pos }: { c: string; pos: string }) => (
  <div className={`flex items-center ${pos}`}>
    <Minus size={14} color={c} strokeWidth={1} className="w-[45px]" />
    <Square size={12} color={c} strokeWidth={1} className="w-[45px]" />
    <X size={15} color={c} strokeWidth={1} className="w-[46px]" />
  </div>
);

const CellBtn = ({ className, children }: { className: string; children: ReactNode }) => (
  <div className={`${className} flex items-center justify-center rounded-[3px] border border-[#a0a4aa] bg-linear-to-b from-white to-[#ececec] text-[12px] text-[#222] shrink-0`}>{children}</div>
);

const DimCombo = ({ className, children }: { className: string; children?: ReactNode }) => (
  <div className={`${className} h-[22px] bg-[#efefef] border border-[#d0d2d5] flex items-center justify-between pr-[4px] shrink-0`}>
    <div className="flex items-center h-full">{children}</div>
    <Tri c="#a0a0a0" s={0.7} />
  </div>
);
const VBar = ({ className = "" }: { className?: string }) => <div className={`${className} w-[1px] h-[22px] bg-[#8d8f92] shrink-0`} />;
const Slot22 = ({ children }: { children: ReactNode }) => <div className="w-6 flex items-center justify-center shrink-0">{children}</div>;

const Head = ({ className, children }: { className: string; children?: ReactNode }) => (
  <div className={`${className} h-full border-r border-[#e2e3e5] flex items-center shrink-0 overflow-hidden`}>{children}</div>
);
const HScroll = ({ thumb, className }: { thumb: string; className?: string }) => (
  <div className={`${className ?? ""} h-[15px] bg-[#f3f3f3] flex items-center shrink-0`}>
    <div className="w-[19px] flex justify-center shrink-0"><ChevronLeft size={13} strokeWidth={3} color="#555" /></div>
    <div className={`${thumb} h-full bg-[#cdcdcd] shrink-0`} />
    <div className="ml-auto w-[19px] flex justify-center shrink-0"><ChevronRight size={13} strokeWidth={3} color="#555" /></div>
  </div>
);

const PrintCenter = () => (
  <div className="absolute left-[179px] top-[421px] w-[898px] h-[578px] bg-[#efefef] border border-[#555] flex flex-col text-[12px] text-[#222] shadow-md">
    <div className="h-[26px] bg-white flex items-center relative shrink-0 pl-[8px]">
      <svg viewBox="0 0 16 16" className="w-4 h-4"><path d="M0 0h16v16H0z" fill="#1a56d6" /><path d="M4 12 8 4v8l4-7" stroke="#fff" strokeWidth="1.500" fill="none" /></svg>
      <span className="ml-[5px] text-[#9a9a9a]">打印中心</span>
      <WinButtons c="#888" pos="absolute right-[2px] top-[6px]" />
    </div>
    <div className="h-[32px] bg-linear-to-b from-white to-[#e9ebee] flex items-center text-[#333] shrink-0 border-b-2 border-[#9ea2a8]">
      <div className="w-[1px]" />
      <div className="w-[23px] flex justify-center shrink-0"><Plus size={14} color="#777" strokeWidth={4} /></div>
      <VBar className="mx-[1px]" />
      <Slot22><S c="#777" w={2}><path d="M4 1v11h11M1 4h11v11" /></S></Slot22>
      <Slot22><S c="#777" w={2}><path d="M8 2 14 8 8 14 2 8z" /><circle cx="8" cy="8" r="1.500" /></S></Slot22>
      <VBar />
      <div className="w-[2px]" />
      <Slot22><S c="#777" w={2}><path d="M2 3h9M2 7h9M2 11h6M13 2v12" /></S></Slot22>
      <Slot22><S c="#777" w={2}><path d="M6 3h9M8 7h7M10 11h5M3 2v12" /></S></Slot22>
      <div className="w-[1px]" />
      <VBar />
      <Slot22><Printer size={14} color="#777" strokeWidth={2.5} /></Slot22>
      <div className="w-[14px] flex justify-center"><Tri c="#999" s={0.6} /></div>
      <Slot22><Settings size={14} color="#777" fill="#777" /></Slot22>
      <div className="w-[13px] flex justify-center"><Tri c="#999" s={0.6} /></div>
      <VBar />
      <span className="ml-[3px] w-[86px] shrink-0 whitespace-nowrap"><Sim t="打印机/绘图仪" /></span>
      <DimCombo className="w-[292px]" />
      <span className="ml-[4px] text-[#999] w-[28px]">份数</span>
      <DimCombo className="w-[39px]"><div className="ml-[2px] w-[8px] h-[16px] bg-[#0a6ed1] text-[#0a6ed1] text-[11px] leading-[16px]">1</div></DimCombo>
      <span className="ml-[4px] w-[53px]">打印样式</span>
      <DimCombo className="w-[171px] ml-[8px]" />
    </div>
    <div className="h-[25px] bg-linear-to-b from-white to-[#e9ebee] flex items-center text-[#333] shrink-0 border-b-2 border-[#9ea2a8] pl-[2px]">
      <span className="w-[31px]">纸张</span>
      <DimCombo className="w-[286px]" />
      <span className="ml-[5px] w-[49px]"><Sim t="比例 1:" /></span>
      <DimCombo className="w-[59px]" />
      <div className="w-[11px] h-[11px] border border-[#b4b6b9] ml-[7px] shrink-0" />
      <span className="ml-[5px] w-[25px] text-[#999]">居中</span>
      <div className="w-[11px] h-[11px] border border-[#b4b6b9] ml-[8px] shrink-0" />
      <span className="ml-[5px] w-[25px] text-[#999]">布满</span>
      <VBar className="ml-[4px]" />
      <span className="ml-[3px] w-[50px]">输出目录</span>
      <div className="w-[275px] h-[22px] ml-[4px] border border-[#85888c] bg-[#efefef] pl-[3px] flex items-center text-[#666] whitespace-nowrap overflow-hidden shrink-0">
        <Sim t="D:\sowco\AutoCad\AutoCad\work\Temp\批量打印" />
      </div>
      <Folder size={15} color="#777" fill="#777" className="ml-[6px]" />
    </div>
    <div className="flex-1 min-h-0 flex">
      <div className="w-[232px] flex flex-col shrink-0">
        <div className="h-[26px] bg-white flex items-center shrink-0">
          <Head className="w-[22px] justify-center">*</Head>
          <span className="ml-[6px]">文件名</span>
        </div>
        <div className="flex-1 min-h-0 flex">
          <div className="h-[16px] flex items-center"><span className="w-[28px] pl-[9px]"><Sim t="1" /></span><span className="whitespace-nowrap"><Sim t="测试演示-批量打印.dwg" /></span></div>
        </div>
        <HScroll thumb="w-[172px]" className="mb-[1px]" />
      </div>
      <div className="w-[3px] bg-white border-x border-[#9ea2a8] shrink-0" />
      <div className="flex-1 min-w-0 flex flex-col">
        <div className="h-[26px] bg-white flex items-center shrink-0">
          <Head className="w-[19px] justify-center">*</Head>
          <Head className="w-[158px] pl-[6px]">图号</Head>
          <Head className="w-[155px] pl-[5px]">图纸名称</Head>
          <Head className="w-[120px] pl-[5px]">纸张</Head>
          <Head className="w-[60px] justify-center">图幅</Head>
          <Head className="w-[59px] justify-center">比例</Head>
          <Head className="w-[61px] justify-center">方向</Head>
          <span className="ml-[5px]">工程</span>
        </div>
        <div className="flex-1 min-h-0">
          {["03-PLAN-l1", "03-PLAN-l2"].map((n, i) => (
            <div key={n} className="h-[16px] flex items-center">
              <div className="w-[19px] text-center shrink-0"><Sim t={String(i + 1)} /></div>
              <div className="w-[158px] pl-[7px] shrink-0"><Sim t="FWJZ_JST_66613" /></div>
              <div className="w-[155px] pl-[5px] shrink-0"><Sim t={n} /></div>
              <div className="w-[120px] shrink-0" />
              <div className="w-[60px] text-center shrink-0"><Sim t="A0" /></div>
              <div className="w-[59px] text-center shrink-0"><Sim t="1:300" /></div>
              <div className="w-[61px] text-center shrink-0">横向</div>
              <span className="ml-[5px]">深圳</span>
            </div>
          ))}
        </div>
        <HScroll thumb="w-[500px]" className="mb-[1px]" />
      </div>
    </div>
    <div className="h-[21px] bg-linear-to-b from-[#f7f7f8] to-[#e3e4e7] border-t-2 border-[#9ea2a8] pl-[3px] leading-[18px] shrink-0">信息</div>
  </div>
);

const InputRow = ({ label, value, icon }: { label: string; value: ReactNode; icon?: ReactNode }) => (
  <div className="flex items-center h-[20px]">
    <span className="w-[72px] pl-[15px] shrink-0 whitespace-nowrap">{label}</span>
    <div className="w-[325px] h-full border border-[#7f8286] bg-white flex items-center justify-between pl-[2px] shrink-0">
      <span className="whitespace-nowrap">{value}</span>
      {icon && <div className="w-[23px] h-[16px] border border-[#8d9095] flex items-center justify-center mr-[1px]">{icon}</div>}
    </div>
  </div>
);

const SettingsDlg = () => (
  <div className="absolute left-[223px] top-[633px] w-[446px] h-[198px] bg-[#f0f0f0] border border-[#8a8d91] text-[12px] text-[#111] flex flex-col shadow-lg">
    <div className="h-[25px] bg-white flex items-center relative shrink-0 pl-[3px]">
      <span className="text-[#a0a0a0]">设置</span>
      <WinButtons c="#999" pos="absolute right-[0px] top-[5px]" />
    </div>
    <div className="ml-[13px] w-[409px] mt-[12px] h-[122px] rounded-[5px] border border-[#a8abb0] bg-linear-to-b from-[#f0f0f0] to-[#e4e7ec] flex flex-col pt-[14px] gap-[17px] shrink-0">
      <InputRow label="输出目录" value={<Sim t="D:\sowco\AutoCad\AutoCad\work\Temp\批量打印" />} icon={<Folder size={13} color="#000" fill="#000" />} />
      <InputRow label="文件命名" value="图别_图号_版次_图纸名称" icon={<Settings size={13} color="#000" fill="#000" strokeWidth={3} />} />
      <div className="-mt-[3px]"><InputRow label="分隔符" value={<Sim t="_" />} /></div>
    </div>
    <div className="flex justify-end gap-[6px] pr-[23px] mt-[10px]">
      <CellBtn className="w-[75px] h-[23px] border-2 border-[#9da1a7]"><Mn a="确定" k="A" /></CellBtn>
      <CellBtn className="w-[75px] h-[23px]"><Mn a="取消" k="C" /></CellBtn>
    </div>
  </div>
);

const ListBox = ({ items, sel }: { items: string[]; sel: string }) => (
  <div className="w-[230px] h-[199px] border border-[#85888c] bg-white px-[1px] text-[12px] text-black shrink-0">
    {items.map((t) => (
      <div key={t} className={`h-[21px] pl-[2px] leading-[21px] ${t === sel ? "bg-linear-to-b from-[#fdd884] to-[#fcc95a]" : ""}`}>{t}</div>
    ))}
  </div>
);

const NamingDlg = () => (
  <div className="absolute left-[721px] top-[583px] w-[546px] h-[348px] bg-[#eeeeee] border border-[#707478] text-[12px] text-[#111] flex flex-col shadow-lg">
    <div className="h-[25px] bg-white flex items-center relative shrink-0 pl-[5px]">
      <svg viewBox="0 0 16 12" className="w-[15px] h-[12px]"><path d="M4 12a3.500 3.500 0 0 1-.500-7A5 5 0 0 1 13 4a4 4 0 0 1-.500 8z" fill="#1e90e8" /><path d="m5 9 3-3 3 3" stroke="#fff" fill="none" /></svg>
      <span className="ml-[5px] text-[#333]">命名规则</span>
      <WinButtons c="#111" pos="absolute right-[0px] top-[5px]" />
    </div>
    <div className="flex-1 min-h-0 flex flex-col pl-[14px] pt-[13px]">
      <div className="flex h-[16px] items-center shrink-0">
        <span className="w-[246px]">可选字段</span>
        <span>已选字段</span>
      </div>
      <div className="flex mt-[1px] shrink-0">
        <ListBox items={["文件名", "序号", "图号"]} sel="图号" />
        <div className="w-[50px] flex flex-col items-center pt-[57px] gap-[6px] shrink-0">
          <CellBtn className="w-[23px] h-[23px]"><ChevronRight size={12} strokeWidth={3} color="#222" /></CellBtn>
          <CellBtn className="w-[23px] h-[23px]"><ChevronLeft size={12} strokeWidth={3} color="#222" /></CellBtn>
        </div>
        <ListBox items={["图纸名称", "图幅", "工程名称"]} sel="工程名称" />
      </div>
      <div className="flex mt-[15px] h-[16px] items-center shrink-0">
        <span className="w-[35px]">示例</span>
        <span>图纸名称_图幅_工程名称</span>
      </div>
      <div className="flex items-start mt-[15px] -ml-[2px] shrink-0">
        <div className="w-[108px] h-[21px] border border-[#7f8286] bg-white pl-[2px] leading-[20px] shrink-0"><Sim t="_" /></div>
        <span className="ml-[8px] mt-[2px] w-[60px] shrink-0 whitespace-nowrap">字段分隔符</span>
        <CellBtn className="w-[75px] h-[23px] ml-[178px]"><Mn a="确定" k="A" /></CellBtn>
        <CellBtn className="w-[75px] h-[23px] ml-[6px]"><Mn a="取消" k="C" /></CellBtn>
      </div>
    </div>
  </div>
);

export default function App() {
  return (
    <div className="relative w-[1915px] h-[1041px] overflow-hidden bg-[#323842] font-['Liberation_Sans','Noto_Sans_CJK_SC',sans-serif] text-[12px]">
      <div className="h-[23px] bg-white flex items-center relative text-[12.7px] text-[#9a9a9a] whitespace-nowrap">
        <svg viewBox="0 0 16 16" className="w-4 h-4 ml-[3px] mr-[4px]"><path d="M0 0h16v16H0z" fill="#1a56d6" /><path d="M4 12 8 4v8l4-7" stroke="#fff" strokeWidth="1.500" fill="none" /></svg>
        ZWCAD 2020 专业版 - [D:\sowco\AutoCad\AutoCad\work\深圳市中设广场项目\施工图\设计区\建筑\测试演示-批量打印.dwg - 只读]
        <WinButtons c="#999" pos="absolute right-[0px] top-[3px]" />
      </div>
      <div className="h-[19px] bg-[#2f3640] flex items-center pl-[11px] text-[#dfe3e8] whitespace-nowrap">
        {MENU.map(([t, w]) => (
          <div key={t} className={`${w} shrink-0`}>{t}</div>
        ))}
      </div>
      <div className="h-[1px] bg-white/85" />
      <Toolbar1 />
      <Toolbar2 />
      <div className="h-[3px]" />
      <div className="flex h-[915px]">
        <div className="w-[1383px] flex flex-col shrink-0">
          <div className="h-[811px] flex">
            <div className="w-[25px] h-[425px] bg-[#3f4651] flex flex-col shrink-0">
              <div className="h-[5px] mx-[1px] border-y border-[#8f99a6]" />
              <IconStrip icons={LEFT_ICONS} />
            </div>
            <div className="w-[1324px] flex flex-col shrink-0">
              <div className="h-[26px] bg-[#2d3036] flex items-center text-[12px] shrink-0 pl-[6px]">
                <div className="w-[11px] h-full bg-[#4a525e] flex items-center justify-center mr-[1px]"><Tri s={0.9} /></div>
                <FileTab className="w-[174px]" name="Drawing1.dwg" />
                <FileTab className="w-[172px]" name="SY-PLAN-L2.dwg*" />
                <div className="w-[173px] h-full bg-[#4f6279] flex items-center pl-[4px] text-white font-bold shrink-0">
                  <svg viewBox="0 0 12 16" className="w-[12px] h-[16px] shrink-0"><path d="M3 7V4a3 3 0 0 1 6 0v3" stroke="#e05050" strokeWidth="2" fill="none" /><path d="M1 7h10v9H1z" fill="#e05050" /><circle cx="6" cy="11" r="1.500" fill="#fff" /></svg>
                  <span className="ml-[3px] whitespace-nowrap"><Sim t="测试演...打印.dwg*" /></span>
                  <X size={14} strokeWidth={3} color="#fff" className="ml-auto mr-[8px]" />
                </div>
                <div className="w-[33px] h-full bg-[#3f4651] ml-[1px] flex items-center justify-center">
                  <S c="none"><path d="M2 2h9l3 3v9H2z" fill="#fff" /><path d="M8 5v6M5 8h6" stroke="#4ea4ea" /></S>
                </div>
              </div>
              <div className="flex-1 min-h-0 flex pl-[6px]">
                <div className="w-[1288px] flex flex-col shrink-0">
                  <div className="flex-1 min-h-0 bg-[#1b1e24] relative">
                    <Drawing />
                    <div className="absolute top-[10px] right-[10px] flex items-center gap-[10px]">
                      <div className="w-[10px] h-[2px] bg-[#c8c8c8]" />
                      <Square size={9} color="#ddd" strokeWidth={3} />
                      <X size={12} color="#ddd" strokeWidth={3.5} />
                    </div>
                  </div>
                  <div className="h-[15px] bg-[#2d3035] flex items-center text-[#aab0b8] shrink-0">
                    <div className="w-[15px] h-full bg-[#3f4651] flex items-center justify-center"><svg viewBox="0 0 8 5" width="9" height="6"><path d="M0 5h8L4 0z" fill="#fff" /></svg></div>
                    {["M6 0v8L1 4zM0 0v8", "M6 0v8L1 4z", "M1 0v8l5-4z", "M1 0v8l5-4zM7 0v8"].map((d) => (
                      <div key={d} className="w-[15px] h-full bg-[#3f4651] ml-[1px] flex items-center justify-center"><svg viewBox="0 0 8 8" width="8" height="10"><path d={d} fill="#7e8794" stroke="#7e8794" strokeWidth=".6" /></svg></div>
                    ))}
                    <div className="w-[49px] h-full ml-[2px] bg-[#4f6279] text-white font-bold text-center leading-[15px]">模型</div>
                    <div className="w-[40px] h-full ml-[2px] bg-[#3f4651] pl-[8px] leading-[15px]">布局</div>
                  </div>
                </div>
                <div className="w-[28px] bg-[#3f4651] flex flex-col items-center border-l border-[#8f99a6] mt-[1px] shrink-0">
                  <div className="h-[5px] w-full border-y border-[#8f99a6]" />
                  <div className="flex flex-col items-center pt-[2px]">
                    {STRIP_A.map((I, i) => (
                      <div key={i} className="h-[23px] flex items-center justify-center">
                        <div className="w-4 h-4 bg-white flex items-center justify-center"><I size={14} color="#1c2430" strokeWidth={2} /></div>
                      </div>
                    ))}
                  </div>
                </div>
                <div className="w-[2px] shrink-0" />
              </div>
            </div>
            <div className="w-[28px] flex flex-col shrink-0">
              <div className="bg-[#3f4651] h-[424px] border-l border-[#8f99a6] flex flex-col items-center">
                <div className="h-[5px] w-full border-y border-[#8f99a6]" />
                <div className="pt-[2px]"><IconStrip icons={STRIP_B} /></div>
              </div>
              <div className="bg-[#3f4651] h-[102px] mt-[3px] border-l border-[#8f99a6] flex flex-col items-center">
                <div className="h-[5px] w-full border-y border-[#8f99a6]" />
                <div className="pt-[2px]"><IconStrip icons={STRIP_B2} /></div>
              </div>
            </div>
          </div>
          <Command />
        </div>
        <Panel />
      </div>
      <StatusBar />
      <PrintCenter />
      <SettingsDlg />
      <NamingDlg />
    </div>
  );
}
